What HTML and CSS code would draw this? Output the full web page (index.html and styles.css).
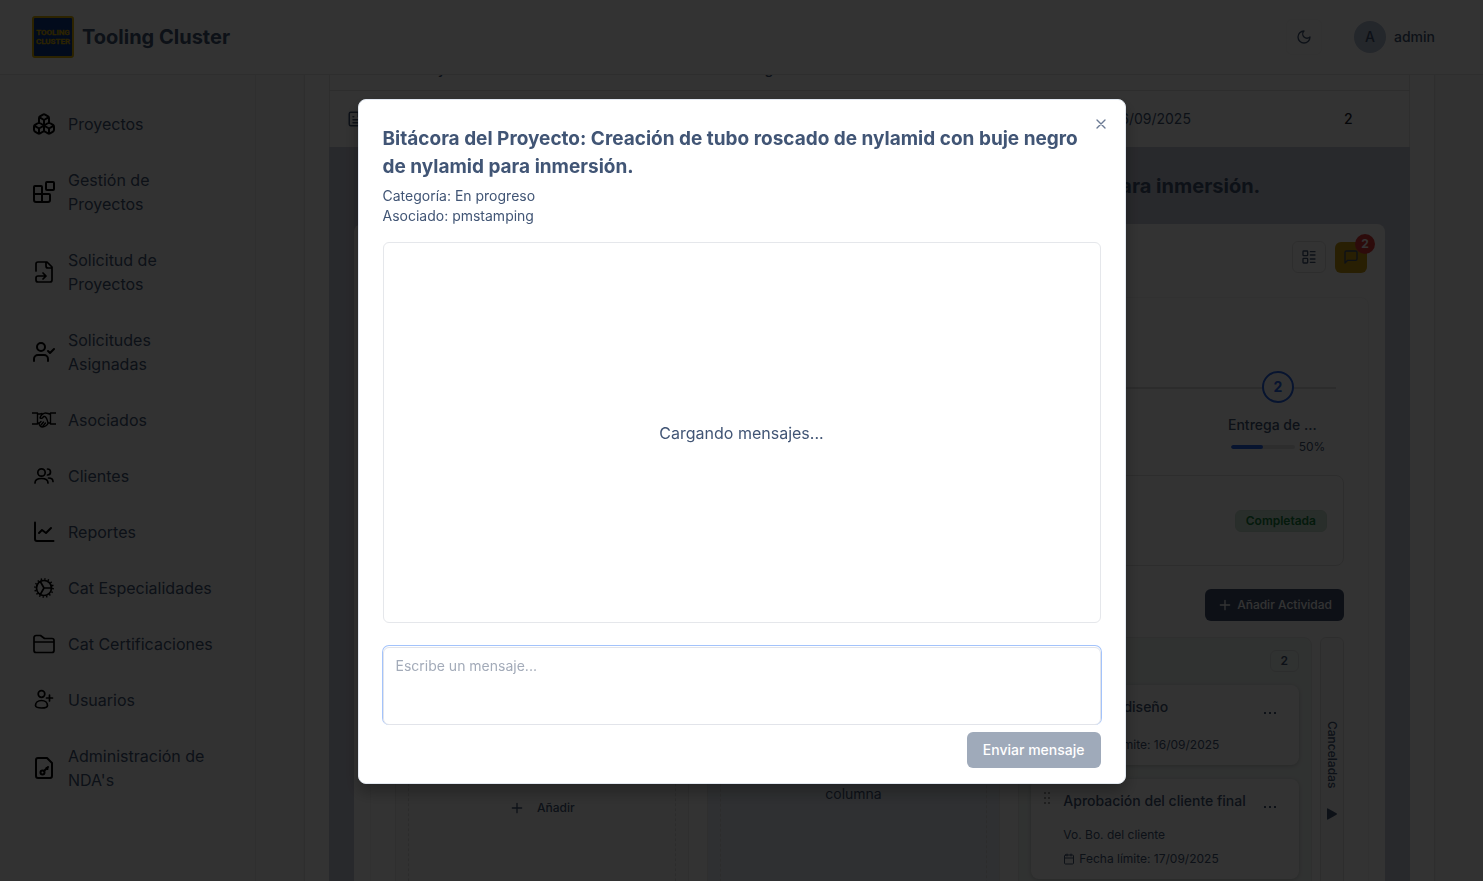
FILE: index.html
```html
<!DOCTYPE html>
<html lang="es">
<head>
<meta charset="utf-8">
<title>Tooling Cluster</title>
<link rel="stylesheet" href="styles.css">
</head>
<body>
<div class="app">
  <header class="topbar">
    <div class="brand">
      <svg class="logo" viewBox="0 0 42 42" aria-hidden="true">
        <rect x="1" y="1" width="40" height="40" rx="2" fill="#0b3a8c" stroke="#d9ae00" stroke-width="2"/>
        <text class="logo-text" x="21" y="19" text-anchor="middle">TOOLING</text>
        <text class="logo-text" x="21" y="28" text-anchor="middle">CLUSTER</text>
      </svg>
      <span class="brand-name">Tooling Cluster</span>
    </div>
    <div class="account">
      <button class="theme-btn" type="button" aria-label="Tema">
        <svg class="ico-16" viewBox="0 0 24 24"><path d="M12 3a6 6 0 0 0 9 9 9 9 0 1 1-9-9Z"/></svg>
      </button>
      <button class="user-btn" type="button"><span class="avatar">A</span><span>admin</span></button>
    </div>
  </header>

  <div class="body">
    <nav class="sidebar">
      <a class="nav-item" href="#"><svg class="ico-24" viewBox="0 0 24 24"><path d="M2.97 12.92A2 2 0 0 0 2 14.63v3.24a2 2 0 0 0 .97 1.71l3 1.8a2 2 0 0 0 2.06 0L12 19v-5.5l-5-3-4.03 2.42ZM7 16.5l-4.74-2.85M7 16.5l5-3M7 16.5v5.17M12 13.5V19l3.97 2.38a2 2 0 0 0 2.06 0l3-1.8a2 2 0 0 0 .97-1.71v-3.24a2 2 0 0 0-.97-1.71L17 10.5l-5 3ZM17 16.5l-5-3M17 16.5l4.74-2.85M17 16.5v5.17M7.97 4.42A2 2 0 0 0 7 6.13v4.37l5 3 5-3V6.13a2 2 0 0 0-.97-1.71l-3-1.8a2 2 0 0 0-2.06 0l-3 1.8ZM12 8 7.26 5.15M12 8l4.74-2.85M12 13.5V8"/></svg><span>Proyectos</span></a>
      <a class="nav-item" href="#"><svg class="ico-24" viewBox="0 0 24 24"><rect x="14" y="2" width="8" height="8" rx="1"/><path d="M10 22V7a1 1 0 0 0-1-1H3a1 1 0 0 0-1 1v13a2 2 0 0 0 2 2h12a2 2 0 0 0 2-2v-5a1 1 0 0 0-1-1H2"/></svg><span>Gestión de Proyectos</span></a>
      <a class="nav-item" href="#"><svg class="ico-24 thin" viewBox="0 0 24 24"><path d="M4 11V4a2 2 0 0 1 2-2h9l5 5v13a2 2 0 0 1-2 2H6a2 2 0 0 1-2-2v-2a2 2 0 0 1 2-2h8M14 2v4a2 2 0 0 0 2 2h4M11 13l3 3-3 3"/></svg><span>Solicitud de Proyectos</span></a>
      <a class="nav-item" href="#"><svg class="ico-24" viewBox="0 0 24 24"><path d="M2 21v-2a4 4 0 0 1 4-4h6a4 4 0 0 1 4 4v2M16 11l2 2 4-4"/><circle cx="9" cy="7" r="4"/></svg><span>Solicitudes Asignadas</span></a>
      <a class="nav-item" href="#"><svg class="ico-24 fine" viewBox="0 0 24 24"><path d="M0 5h5.500v11H0M24 5h-5.500v11H24M5.500 6H8l2-.5M18.500 6c-2 0-3-1-5-1-2 0-5 2.500-5.500 5 1.500 1 3 0 3.500-1.500h1.500c2 1.500 2.500 4 3 6.500M5.500 15H7c0 2 1.500 4 3.500 4 2 0 5.500-2 5.500-4h2.500M9 13.500 7 15.500M11.500 14 9 17M13.500 15l-2.500 3"/></svg><span>Asociados</span></a>
      <a class="nav-item" href="#"><svg class="ico-24 thin" viewBox="0 0 24 24"><circle cx="9.500" cy="8.500" r="3.700"/><path d="M3 19c0-3 3-4.500 6.500-4.500S16 16 16 19M15.500 5a3 3 0 1 1 0 6M16.500 14c3 0 4.500 1.500 4.500 3.500"/></svg><span>Clientes</span></a>
      <a class="nav-item" href="#"><svg class="ico-24" viewBox="0 0 24 24"><path d="M3 2.500V19a2 2 0 0 0 2 2h16.500M7 13l3-3 4 3 5-5"/></svg><span>Reportes</span></a>
      <a class="nav-item" href="#"><svg class="ico-24 thin" viewBox="0 0 24 24"><circle cx="12" cy="12" r="7.500"/><circle cx="12" cy="12" r="9" stroke-dasharray="1.400 2.130" stroke-linecap="butt"/><path d="M12 12h7.500M12 12 8.250 5.500M12 12l-3.750 6.500"/></svg><span>Cat Especialidades</span></a>
      <a class="nav-item" href="#"><svg class="ico-24 thin" viewBox="0 0 24 24"><path d="M2 18.500v-13A2 2 0 0 1 4 3.500h4.500l4 3H20a2 2 0 0 1 2 2v10a2 2 0 0 1-2 2H4a2 2 0 0 1-2-2ZM2 10h20"/></svg><span>Cat Certificaciones</span></a>
      <a class="nav-item" href="#"><svg class="ico-24 thin" viewBox="0 0 24 24"><circle cx="9.500" cy="6" r="3.300"/><path d="M3.500 17.500c0-3 2.500-5 6-5s6 2 6 5c0 1.500-2.500 2.500-6 2.500s-6-1-6-2.500ZM17.500 7v6M14.500 10h6"/></svg><span>Usuarios</span></a>
      <a class="nav-item" href="#"><svg class="ico-24" viewBox="0 0 24 24"><path d="M15 2H6a2 2 0 0 0-2 2v16a2 2 0 0 0 2 2h12a2 2 0 0 0 2-2V7ZM12 15l4-4M14.500 12l1 1"/><circle cx="10.500" cy="16.500" r="2"/></svg><span>Administración de NDA's</span></a>
    </nav>

    <main class="main">
      <section class="card">
        <table class="projects">
          <thead>
            <tr><th class="c-icon"></th><th class="c-name">Proyecto</th><th class="c-cat">Categoría</th><th class="c-date"></th><th class="c-num"></th></tr>
          </thead>
          <tbody>
            <tr>
              <td class="c-icon"><svg class="ico-18" viewBox="0 0 24 24"><path d="M15 3H5a2 2 0 0 0-2 2v14a2 2 0 0 0 2 2h14a2 2 0 0 0 2-2V9ZM15 3v6h6M8 9h1M8 13h8M8 17h8"/></svg></td>
              <td></td><td></td><td>16/09/2025</td><td class="c-num">2</td>
            </tr>
          </tbody>
        </table>
        <div class="expanded">
          <h2 class="expanded-title">Creación de tubo roscado de nylamid con buje negro de nylamid para inmersión.</h2>
          <div class="detail">
            <div class="detail-actions">
              <button class="outline-btn" type="button" aria-label="Vista"><svg class="ico-16" viewBox="0 0 24 24"><rect x="3" y="3" width="7" height="7" rx="1"/><rect x="3" y="14" width="7" height="7" rx="1"/><path d="M14 4h7M14 9h7M14 15h7M14 20h7"/></svg></button>
              <button class="chat-btn" type="button" aria-label="Bitácora"><svg class="ico-16" viewBox="0 0 24 24"><path d="M21 15a2 2 0 0 1-2 2H7l-4 4V5a2 2 0 0 1 2-2h14a2 2 0 0 1 2 2z"/></svg><span class="count">2</span></button>
            </div>
            <div class="panel">
              <div class="stepper">
                <div class="step">
                  <span class="step-dot">2</span>
                  <span class="step-name">Entrega de ...</span>
                  <span class="step-progress"><span class="bar"><span class="bar-fill" style="width:50%"></span></span>50%</span>
                </div>
              </div>
              <div class="summary"><span class="done">Completada</span></div>
              <div class="toolbar"><button class="add-btn" type="button"><svg class="ico-16" viewBox="0 0 24 24"><path d="M5 12h14M12 5v14"/></svg>Añadir Actividad</button></div>
              <div class="board">
                <div class="columns">
                  <div class="column"><div class="drop drop-add"><button class="plain-btn" type="button"><svg class="ico-16" viewBox="0 0 24 24"><path d="M5 12h14M12 5v14"/></svg>Añadir</button></div></div>
                  <div class="column blue"><div class="drop drop-empty">columna</div></div>
                  <div class="column green">
                    <div class="column-head"><span class="total">2</span></div>
                    <article class="task">
                      <svg class="grip" viewBox="0 0 8 14"><path d="M1 1h2v2H1zM5 1h2v2H5zM1 6h2v2H1zM5 6h2v2H5zM1 11h2v2H1zM5 11h2v2H5z"/></svg>
                      <div class="task-main">
                        <div class="task-top"><h3>Revisión diseño</h3><button class="dots" type="button" aria-label="Opciones"><i></i><i></i><i></i></button></div>
                        <p class="due"><svg class="ico-12" viewBox="0 0 24 24"><rect x="3" y="4" width="18" height="18" rx="2"/><path d="M3 10h18M8 2v4M16 2v4"/></svg>Fecha límite: 16/09/2025</p>
                      </div>
                    </article>
                    <article class="task">
                      <svg class="grip" viewBox="0 0 8 14"><path d="M1 1h2v2H1zM5 1h2v2H5zM1 6h2v2H1zM5 6h2v2H5zM1 11h2v2H1zM5 11h2v2H5z"/></svg>
                      <div class="task-main">
                        <div class="task-top"><h3>Aprobación del cliente final</h3><button class="dots" type="button" aria-label="Opciones"><i></i><i></i><i></i></button></div>
                        <p class="note">Vo. Bo. del cliente</p>
                        <p class="due"><svg class="ico-12" viewBox="0 0 24 24"><rect x="3" y="4" width="18" height="18" rx="2"/><path d="M3 10h18M8 2v4M16 2v4"/></svg>Fecha límite: 17/09/2025</p>
                      </div>
                    </article>
                  </div>
                </div>
                <button class="cancelled" type="button"><span class="cancelled-label">Canceladas</span><svg class="tri" viewBox="0 0 10 12"><path d="M0 1Q0 0 1 .5L9.500 5.300Q10.300 6 9.500 6.700L1 11.500Q0 12 0 11Z"/></svg></button>
              </div>
            </div>
          </div>
        </div>
      </section>
    </main>
  </div>
</div>

<div class="overlay">
  <div class="modal" role="dialog" aria-modal="true" aria-labelledby="dlg-title">
    <h1 class="modal-title" id="dlg-title">Bitácora del Proyecto: Creación de tubo roscado de nylamid con buje negro de nylamid para inmersión.</h1>
    <p class="modal-meta">Categoría: En progreso<br>Asociado: pmstamping</p>
    <div class="messages">Cargando mensajes...</div>
    <textarea class="compose" aria-label="Mensaje" placeholder="Escribe un mensaje..."></textarea>
    <button class="send" type="button" disabled>Enviar mensaje</button>
    <button class="close" type="button" aria-label="Cerrar"><svg class="ico-16" viewBox="0 0 24 24"><path d="M18 6 6 18M6 6l12 12"/></svg></button>
  </div>
</div>
</body>
</html>
```
FILE: styles.css
```css
* { box-sizing: border-box; }
body { margin: 0; font-family: Inter, "Liberation Sans", sans-serif; font-size: 14px; line-height: 20px; color: #415575; background: #fff; }
h1, h2, h3, p { margin: 0; }
button { font: inherit; color: inherit; background: none; border: 0; padding: 0; }
a { color: inherit; text-decoration: none; }
svg { fill: none; stroke: currentColor; stroke-width: 2; stroke-linecap: round; stroke-linejoin: round; flex: none; }
.ico-24 { width: 24px; height: 24px; color: #000; }
.ico-24.thin { stroke-width: 1.7; }
.ico-24.fine { stroke-width: 1.4; }
.ico-18 { width: 18px; height: 18px; display: block; }
.ico-16 { width: 16px; height: 16px; }
.ico-12 { width: 12px; height: 12px; }

.app { height: 100vh; display: flex; flex-direction: column; overflow: hidden; }
.topbar { display: flex; align-items: center; justify-content: space-between; padding: 16px 48px 16px 32px; background: #fff; border-bottom: 1px solid #e6e6e6; position: relative; z-index: 1; }
.brand { display: flex; align-items: center; gap: 8px; font-size: 20px; line-height: 28px; font-weight: 700; }
.logo { width: 42px; height: 42px; }
.logo-text { font: 700 8px Roboto, "Liberation Sans", sans-serif; fill: #d9ae00; stroke: #d9ae00; stroke-width: 0.3; }
.account { display: flex; align-items: center; gap: 32px; font-weight: 500; }
.theme-btn { width: 36px; height: 36px; border: 1px solid #f8f8f8; border-radius: 6px; display: grid; place-items: center; }
.user-btn { display: flex; align-items: center; gap: 8px; }
.avatar { width: 32px; height: 32px; border-radius: 50%; background: #b4c0d4; display: grid; place-items: center; }

.body { flex: 1; min-height: 0; display: flex; }
.sidebar { width: 256px; flex: none; padding: 21px 39px 0 32px; border-right: 1px solid #ececec; background: #fafafa; font-size: 16px; line-height: 24px; }
.nav-item { display: flex; align-items: center; gap: 12px; padding: 16px 0; }

.main { flex: 1; min-width: 0; overflow: hidden; padding: 0 48px; background: #fafafa; }
.card { background: #fff; border: 1px solid #e6e6e6; border-top: 0; padding: 0 24px; box-shadow: 0 0 2px #0001; }
.projects { width: 100%; margin-top: -33px; border-collapse: collapse; table-layout: fixed; border-left: 1px solid #e6e6e6; border-right: 1px solid #e6e6e6; }
.projects th { height: 48px; padding: 6px 16px 0; text-align: left; font-weight: 500; border-bottom: 1px solid #e0e0e0; }
.projects td { height: 57px; padding: 0 17px; }
.projects .c-icon { width: 70px; }
.c-name { width: 318px; }
.c-cat { width: 380px; }
.projects .c-num { width: 122px; text-align: center; font-weight: 500; color: #1d2430; }
.expanded { background: #c9ccda; padding: 25px 25px 0; }
.expanded-title { text-align: center; font-size: 20px; line-height: 28px; font-weight: 700; margin-bottom: 24px; }
.detail { background: #fff; border-radius: 8px; padding: 17px 16px 0; }
.detail-actions { display: flex; align-items: center; justify-content: flex-end; gap: 9px; margin-bottom: 24px; }
.outline-btn { width: 34px; height: 32px; border: 1px solid #e2e2e2; border-radius: 6px; display: grid; place-items: center; }
.chat-btn { width: 32px; height: 31px; border-radius: 6px; background: #c79a10; display: grid; place-items: center; position: relative; margin-right: 2px; }
.count { position: absolute; top: -8px; right: -8px; width: 20px; height: 20px; border-radius: 50%; background: #e03a3a; color: #fff; font-size: 12px; font-weight: 700; display: grid; place-items: center; }

.panel { border: 1px solid #f4f4f4; padding: 73px 24px 0; border-radius: 8px; }
.stepper { position: relative; display: flex; justify-content: flex-end; padding-right: 16px; margin-bottom: 20px; }
.stepper::before { content: ""; position: absolute; left: 8px; right: 8px; top: 16px; height: 2px; background: #dcdcdc; }
.step { display: flex; flex-direction: column; align-items: center; width: 100px; position: relative; }
.step-dot { width: 32px; height: 32px; border: 2px solid #2563eb; border-radius: 50%; background: #fff; color: #2563eb; font-weight: 700; display: grid; place-items: center; margin-bottom: 12px; }
.step-name { font-weight: 500; align-self: flex-start; white-space: nowrap; }
.step-progress { display: flex; align-items: center; gap: 4px; font-size: 12px; line-height: 16px; margin-top: 4px; }
.bar { width: 64px; height: 4px; border-radius: 2px; background: #e2e2e2; overflow: hidden; }
.bar-fill { display: block; height: 4px; background: #2563eb; border-radius: 2px; }
.summary { height: 91px; border: 1px solid #e0e0e0; border-radius: 8px; display: flex; align-items: center; justify-content: flex-end; padding: 0 16px; }
.done { font-size: 12px; line-height: 16px; font-weight: 600; padding: 2px 10px; border: 1px solid #c8e0d0; border-radius: 6px; background: #cde5d6; color: #15803d; }
.toolbar { display: flex; justify-content: flex-end; margin: 23px 0 16px; }
.add-btn { display: flex; align-items: center; gap: 4px; height: 32px; padding: 0 12px; border-radius: 6px; background: #415070; color: #fff; font-size: 12px; font-weight: 500; }
.board { display: flex; gap: 8px; height: 400px; }
.columns { flex: 1; display: grid; grid-template-columns: repeat(3, minmax(0, 1fr)); gap: 18px; }
.column { border: 1px solid #e8e8e8; border-radius: 8px; padding: 12px; background: #fafafa; display: flex; flex-direction: column; gap: 14px; }
.column.blue { background: #eaf0fa; }
.column.green { background: #f1f7f4; }
.drop { flex: 1; border: 1px dashed #dcdcdc; border-radius: 8px; display: flex; flex-direction: column; align-items: center; }
.drop-add { padding-top: 147px; font-size: 12px; font-weight: 500; }
.drop-empty { padding-top: 133px; }
.plain-btn { display: flex; align-items: center; gap: 12px; }
.column-head { display: flex; justify-content: flex-end; font-size: 12px; line-height: 16px; font-weight: 600; margin-bottom: -1px; }
.total { border: 1px solid #dce2df; border-radius: 6px; padding: 2px 10px; }
.task { background: #fff; border-radius: 8px; box-shadow: 0 1px 4px #0003; padding: 12px; display: flex; align-items: flex-start; gap: 12px; font-size: 12px; line-height: 16px; }
.grip { width: 8px; height: 14px; fill: #a0a0a0; stroke: none; }
.task-main { flex: 1; min-width: 0; }
.task-top { display: flex; justify-content: space-between; height: 32px; }
.task-top h3 { font-size: 14px; line-height: 20px; font-weight: 500; white-space: nowrap; }
.dots { width: 34px; height: 32px; display: flex; align-items: center; justify-content: center; gap: 3px; }
.dots i { width: 2px; height: 2px; background: currentColor; }
.note { margin-top: 4px; }
.due { display: flex; align-items: center; gap: 4px; margin-top: 8px; }
.cancelled { width: 24px; border: 1px solid #e2e2e2; border-radius: 6px; background: #fafafa; display: flex; flex-direction: column; align-items: center; gap: 20px; padding-top: 83px; font-size: 12px; font-weight: 500; }
.cancelled-label { writing-mode: vertical-rl; line-height: 16px; }
.tri { width: 10px; height: 12px; fill: currentColor; stroke: none; }

.overlay { position: fixed; inset: 0; z-index: 10; background: rgba(0, 0, 0, 0.8); display: flex; align-items: center; justify-content: center; padding-top: 2px; }
.modal { position: relative; width: 768px; max-width: 100%; background: #fff; border: 1px solid #e2e8f0; border-radius: 8px; box-shadow: 0 8px 16px rgba(0, 0, 0, 0.3); padding: 25px 24px 15px; display: flex; flex-direction: column; }
.modal-title { font-size: 19px; line-height: 28px; font-weight: 700; }
.modal-meta { margin: 5px 0 16px; }
.messages { height: 381px; border: 1px solid #e5e7eb; border-radius: 6px; display: grid; place-items: center; font-size: 16px; line-height: 24px; }
.compose { margin-top: 24px; height: 78px; padding: 8px 12px; border: 1px solid #e2e4ea; border-radius: 6px; resize: none; font: inherit; color: inherit; background: #fff; outline: 0; box-shadow: 0 -1px 0 0 #fff, 0 -1px 0 1px #a3c3fb; }
.compose::placeholder { color: #a3abb9; opacity: 1; }
.send { align-self: flex-end; margin-top: 7px; height: 36px; padding: 0 16px; border-radius: 6px; background: #9faaba; color: #fff; font-weight: 500; }
.close { position: absolute; top: 16px; right: 16px; width: 16px; height: 16px; display: grid; place-items: center; color: #6b7a94; }
```
